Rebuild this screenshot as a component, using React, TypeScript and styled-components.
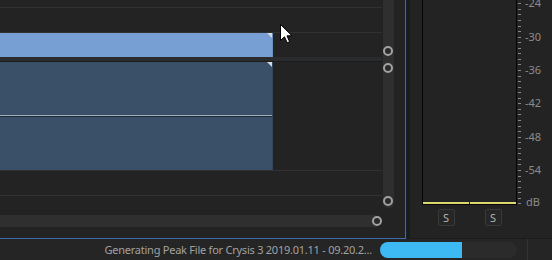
import React from 'react';
import styled, { createGlobalStyle } from 'styled-components';

const GlobalStyle = createGlobalStyle`
  html, body {
    margin: 0;
    padding: 0;
    background: #232323;
  }
  body {
    font-family: "Noto Sans", "Open Sans", sans-serif;
  }
`;

const Screen = styled.div`
  position: relative;
  width: 552px;
  height: 260px;
  overflow: hidden;
  display: flex;
  flex-direction: column;
  background: #232323;
`;

const Workspace = styled.div`
  display: flex;
  height: 239px;
`;

const TimelinePanel = styled.div`
  display: flex;
  width: 405px;
  height: 238px;
  background: #232323;
  border-right: 1px solid #3b6cb0;
  border-bottom: 1px solid #3b6cb0;
`;

const PanelGap = styled.div`
  width: 4px;
  background: #1b1b1b;
  border-left: 1px solid #10203a;
`;

const TrackArea = styled.div`
  width: 383px;
  display: flex;
  flex-direction: column;
`;

const Lane = styled.div<{ $h: number; $line?: boolean }>`
  height: ${(p) => p.$h}px;
  flex: none;
  border-bottom: ${(p) => (p.$line ? '1px solid #313131' : 'none')};
`;

const TrackSeparator = styled.div`
  height: 4px;
  flex: none;
  background: #2a2b2d;
  border-bottom: 1px solid #1c1c1d;
`;

const Track = styled.div<{ $h: number; $line?: boolean }>`
  height: ${(p) => p.$h}px;
  flex: none;
  display: flex;
  border-bottom: ${(p) => (p.$line ? '1px solid #313131' : 'none')};
`;

const Clip = styled.div<{ $tone: 'light' | 'dark' }>`
  position: relative;
  width: 273px;
  height: 100%;
  background: ${(p) => (p.$tone === 'light' ? '#789fd3' : '#3a5068')};
  border-right: 1px solid ${(p) => (p.$tone === 'light' ? '#6d8fbd' : '#33475d')};
  box-sizing: border-box;

  &::after {
    content: '';
    position: absolute;
    top: 0;
    right: 0;
    width: 5px;
    height: 5px;
    background: #d3dae4;
    clip-path: polygon(0 0, 100% 0, 100% 100%);
  }
`;

const CenterLine = styled.div`
  margin-top: 53px;
  height: 1px;
  background: #a3aebd;
  border-bottom: 1px solid #1f2b39;
`;

const HScrollTrack = styled.div`
  position: relative;
  width: 381px;
  height: 12px;
  flex: none;
  background: #2f2f2f;
  border-radius: 0 6px 6px 0;
`;

const VScrollColumn = styled.div`
  width: 22px;
  padding-left: 1px;
`;

const VScrollTrack = styled.div`
  position: relative;
  width: 11px;
  height: 208px;
  background: #2f2f2f;
  border-radius: 0 0 5px 5px;
`;

const Handle = styled.div<{ $x: number; $y: number }>`
  position: absolute;
  left: ${(p) => p.$x}px;
  top: ${(p) => p.$y}px;
  width: 10px;
  height: 10px;
  box-sizing: border-box;
  border-radius: 50%;
  border: 2px solid #a2a2a2;
  background: #2a2a2a;
`;

const MeterPanel = styled.div`
  flex: 1;
  display: flex;
  padding-left: 12px;
  background: #232323;
  border-bottom: 1px solid #1b1b1b;
`;

const MeterColumn = styled.div`
  width: 95px;
  display: flex;
  flex-direction: column;
`;

const MeterBox = styled.div`
  height: 204px;
  display: flex;
  gap: 1px;
  border-left: 1px solid #050505;
  border-right: 1px solid #050505;
  border-bottom: 1px solid #050505;
`;

const Channel = styled.div`
  flex: 1;
  display: flex;
  flex-direction: column;
  justify-content: flex-end;
  background: #232323;
`;

const Level = styled.div`
  height: 2px;
  background: #d9d86c;
`;

const SoloRow = styled.div`
  display: grid;
  grid-template-columns: 1fr 1fr;
  gap: 1px;
  padding: 0 1px;
  margin-top: 4px;
  justify-items: center;
`;

const SoloButton = styled.div`
  width: 17px;
  height: 17px;
  box-sizing: border-box;
  border: 1px solid #393939;
  border-radius: 2px;
  background: #262626;
  color: #b4b4b4;
  font-size: 11px;
  line-height: 15px;
  text-align: center;
  font-family: "Noto Sans", sans-serif;
`;

const Scale = styled.svg`
  display: block;
  flex: none;
  margin-left: 1px;
`;

const StatusBar = styled.div`
  height: 21px;
  display: flex;
  align-items: center;
  background: #252525;
`;

const StatusText = styled.div`
  flex: 1;
  text-align: right;
  padding-right: 8px;
  color: #a2a2a2;
  font-size: 11px;
  letter-spacing: -0.24px;
  white-space: nowrap;
`;

const Progress = styled.div`
  width: 137px;
  height: 16px;
  border-radius: 8px;
  background: #2b2b2b;
  overflow: hidden;
`;

const ProgressFill = styled.div`
  height: 100%;
  background: #3db9f4;
`;

const StatusDivider = styled.div`
  width: 1px;
  height: 100%;
  margin-left: 10px;
  margin-right: 24px;
  background: #333333;
`;

const Cursor = styled.svg`
  position: absolute;
  left: 280px;
  top: 24px;
`;

const dbToY = (db: number) => 203.3 - (db + 60) * 5.555;

function MeterScale() {
  const ticks: number[] = [];
  for (let db = -60; db <= -24; db += 1) ticks.push(db);
  const labels = [-24, -30, -36, -42, -48, -54];
  return (
    <Scale width="34" height="238" viewBox="0 0 34 238">
      {ticks.map((db) => {
        const y = Math.round(dbToY(db)) + 0.5;
        return <line key={db} x1="0" x2="3" y1={y} y2={y} stroke="#8a8a8a" strokeWidth="1" />;
      })}
      {labels.map((db) => (
        <text
          key={db}
          x="7"
          y={dbToY(db) + 4}
          fill="#8c8c8c"
          fontSize="11"
          fontFamily="Noto Sans, sans-serif"
        >
          {db}
        </text>
      ))}
      <text x="8" y={dbToY(-60) + 3} fill="#8c8c8c" fontSize="11" fontFamily="Noto Sans, sans-serif">
        dB
      </text>
    </Scale>
  );
}

export default function App() {
  const progress = 82 / 137;
  return (
    <Screen>
      <GlobalStyle />
      <Workspace>
        <TimelinePanel>
          <TrackArea>
            <Lane $h={7} $line />
            <Lane $h={24} $line />
            <Track $h={24}>
              <Clip $tone="light" />
            </Track>
            <TrackSeparator />
            <Track $h={108} $line>
              <Clip $tone="dark">
                <CenterLine />
              </Clip>
            </Track>
            <Lane $h={24} $line />
            <Lane $h={19} />
            <HScrollTrack>
              <Handle $x={372} $y={1} />
            </HScrollTrack>
            <Lane $h={11} />
          </TrackArea>
          <VScrollColumn>
            <VScrollTrack>
              <Handle $x={0} $y={46} />
              <Handle $x={0} $y={63} />
              <Handle $x={0} $y={196} />
            </VScrollTrack>
          </VScrollColumn>
        </TimelinePanel>
        <PanelGap />
        <MeterPanel>
          <MeterColumn>
            <MeterBox>
              <Channel>
                <Level />
              </Channel>
              <Channel>
                <Level />
              </Channel>
            </MeterBox>
            <SoloRow>
              <SoloButton>S</SoloButton>
              <SoloButton>S</SoloButton>
            </SoloRow>
          </MeterColumn>
          <MeterScale />
        </MeterPanel>
      </Workspace>
      <StatusBar>
        <StatusText>Generating Peak File for Crysis 3 2019.01.11 - 09.20.2...</StatusText>
        <Progress>
          <ProgressFill style={{ width: `${progress * 100}%` }} />
        </Progress>
        <StatusDivider />
      </StatusBar>
      <Cursor width="13" height="20" viewBox="0 0 13 20">
        <path
          d="M0.5 0.5 L0.5 16.5 L4.5 12.8 L7.2 18.8 L9.6 17.8 L7 11.8 L12 11.8 Z"
          fill="#ffffff"
          stroke="#000000"
          strokeWidth="1"
          strokeLinejoin="miter"
        />
      </Cursor>
    </Screen>
  );
}
